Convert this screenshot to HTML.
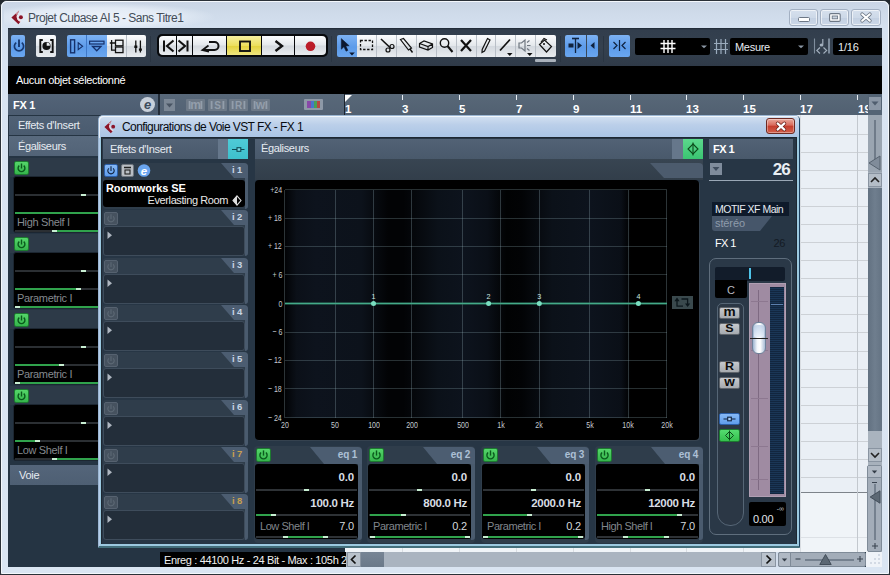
<!DOCTYPE html>
<html lang="fr"><head><meta charset="utf-8"><title>Projet Cubase AI 5 - Sans Titre1</title>
<style>
html,body{margin:0;padding:0}
body{width:890px;height:575px;position:relative;overflow:hidden;background:#22282e;font-family:"Liberation Sans",sans-serif;font-size:11px;color:#fff}
div{position:absolute;box-sizing:border-box}
svg{position:absolute;overflow:visible}
.t{white-space:nowrap;line-height:14px}
.b{font-weight:bold}
</style></head><body>

<div style="left:0px;top:0px;width:890px;height:575px;background:#dae4f1;border:1px solid #2b3138;border-radius:7px 7px 2px 2px"></div>
<div style="left:1px;top:1px;width:888px;height:573px;border:1px solid #f4f8fc;border-radius:6px 6px 1px 1px;background:linear-gradient(#cad5e5,#cfdbea 12px,#d5e1f0 27px,#d8e3f1 60px,#dae5f2)"></div>
<div style="left:4px;top:3px;width:210px;height:25px;background:radial-gradient(ellipse at 45% 55%,rgba(238,243,250,.95) 0,rgba(232,239,248,.8) 45%,rgba(220,230,242,0) 72%)"></div>
<svg style="left:11px;top:10px" width="14" height="15" viewBox="0 0 14 15" ><path d="M8.2 0.6 L0.4 7.4 L7.4 14.2 L9.6 11.6 A5 5 0 0 1 6.0 5.2 Z" fill="#8c1428"/><path d="M8.2 0.6 L4.5 4 L6.2 5.0 Z" fill="#d9a0a8"/><path d="M9.9 11.4 A4.9 4.9 0 0 1 6.3 5.4" stroke="#f3e3e6" stroke-width="1.2" fill="none"/><circle cx="9.9" cy="7.2" r="2" fill="#8c1428"/></svg>
<div class="t" style="left:28px;top:10px;font-size:12px;line-height:16px;color:#434c58;letter-spacing:-0.5px">Projet Cubase AI 5 - Sans Titre1</div>
<div style="left:789px;top:9px;width:29px;height:17px;border:1px solid #a3b0c2;border-radius:3px;background:linear-gradient(#d6e0ed,#cdd9e8 50%,#c3d0e2 52%,#cbd7e7);box-shadow:inset 0 0 0 1px rgba(255,255,255,.6)"></div>
<div style="left:820px;top:9px;width:29px;height:17px;border:1px solid #a3b0c2;border-radius:3px;background:linear-gradient(#d6e0ed,#cdd9e8 50%,#c3d0e2 52%,#cbd7e7);box-shadow:inset 0 0 0 1px rgba(255,255,255,.6)"></div>
<div style="left:851px;top:9px;width:30px;height:17px;border:1px solid #a3b0c2;border-radius:3px;background:linear-gradient(#d6e0ed,#cdd9e8 50%,#c3d0e2 52%,#cbd7e7);box-shadow:inset 0 0 0 1px rgba(255,255,255,.6)"></div>
<svg style="left:798px;top:17px" width="12" height="6" viewBox="0 0 12 6" ><rect x="0.5" y="0.5" width="11" height="4" rx="1" fill="#fff" stroke="#6d7886"/></svg>
<svg style="left:829px;top:13px" width="12" height="9" viewBox="0 0 12 9" ><rect x="0.6" y="0.6" width="10.6" height="7.8" rx="1.2" fill="#fff" stroke="#6d7886" stroke-width="1.1"/><rect x="3.2" y="3" width="5.4" height="2.8" fill="#c9d3df" stroke="#6d7886" stroke-width="0.9"/></svg>
<svg style="left:860px;top:12px" width="12" height="10" viewBox="0 0 12 10" ><path d="M2.2 2.3 L9.8 8.7 M9.8 2.3 L2.2 8.7" stroke="#6d7886" stroke-width="3.7" stroke-linecap="round"/><path d="M2.2 2.3 L9.8 8.7 M9.8 2.3 L2.2 8.7" stroke="#fff" stroke-width="2.1" stroke-linecap="round"/></svg>
<div style="left:8px;top:28px;width:874px;height:38px;background:linear-gradient(#1f2833,#323e4d 2px,#35414f 50%,#2f3a48)"></div>
<div style="left:8px;top:66px;width:874px;height:28px;background:#000"></div>
<div class="t" style="left:16px;top:73px;color:#fff;letter-spacing:-0.33px">Aucun objet sélectionné</div>
<div style="left:11px;top:34.5px;width:14px;height:22.5px;background:linear-gradient(#7db2f3,#5c9bea 55%,#6aa6ef);border-radius:2px"></div>
<svg style="left:11px;top:34px" width="14" height="23" viewBox="0 0 14 23" ><path d="M5.2 8.6 A4.6 4.6 0 1 0 10.8 8.6" fill="none" stroke="#17386f" stroke-width="1.7"/><path d="M8 5.5 V13" stroke="#17386f" stroke-width="1.9"/></svg>
<div style="left:36px;top:34.5px;width:20px;height:22.5px;background:linear-gradient(#fbfcfd,#e4e8ec 48%,#d4d9df 52%,#e9ecef);border-radius:2px"></div>
<svg style="left:36px;top:34px" width="20" height="23" viewBox="0 0 20 23" ><path d="M6.8 6 H4.3 V18 H6.8 M14.2 6 H16.7 V18 H14.2" fill="none" stroke="#111" stroke-width="1.9"/><circle cx="10.5" cy="12" r="4.1" fill="#111"/><path d="M10.7 11.8 V8.6 A3.2 3.2 0 0 1 13.9 11.8 Z" fill="#e9ecef"/></svg>
<div style="left:67px;top:34.5px;width:40px;height:22.5px;background:linear-gradient(#7db2f3,#5c9bea 55%,#6aa6ef);border-radius:2px 0 0 2px"></div>
<div style="left:107px;top:34.5px;width:39px;height:22.5px;background:linear-gradient(#fbfcfd,#e4e8ec 48%,#d4d9df 52%,#e9ecef);border-radius:0 2px 2px 0"></div>
<div style="left:86px;top:34.5px;width:1px;height:22.5px;background:#3f78c8"></div>
<div style="left:126px;top:34.5px;width:1px;height:22.5px;background:#b5bcc4"></div>
<svg style="left:67px;top:34px" width="20" height="23" viewBox="0 0 20 23" ><rect x="3.6" y="5.8" width="4" height="13" fill="none" stroke="#15306a" stroke-width="1.4"/><path d="M11.2 8.8 L15.6 12.2 L11.2 15.6 Z" fill="none" stroke="#15306a" stroke-width="1.1"/></svg>
<svg style="left:87px;top:34px" width="20" height="23" viewBox="0 0 20 23" ><rect x="2.6" y="7.2" width="14.4" height="2.8" fill="none" stroke="#15306a" stroke-width="1.2"/><path d="M5.5 12.5 H14 L9.75 16.8 Z" fill="none" stroke="#15306a" stroke-width="1.3"/></svg>
<svg style="left:107px;top:34px" width="20" height="23" viewBox="0 0 20 23" ><path d="M2.8 9 H6.4 M4.6 6 V16.2 H8.5 M4.6 9 H8.5" fill="none" stroke="#111" stroke-width="1.3"/><rect x="8.5" y="6.2" width="7.5" height="5.6" fill="none" stroke="#111" stroke-width="1.3"/><rect x="8.5" y="13" width="7.5" height="5.6" fill="none" stroke="#111" stroke-width="1.3"/></svg>
<svg style="left:127px;top:34px" width="20" height="23" viewBox="0 0 20 23" ><path d="M8.8 6.5 V18.6 M13.4 6.5 V18.6" stroke="#111" stroke-width="1.3"/><path d="M7.3 12.8 H10.3 M11.9 15.6 H14.9" stroke="#111" stroke-width="2.4"/></svg>
<div style="left:157px;top:34px;width:171px;height:23px;background:#07090c;border-radius:5px"></div>
<div style="left:159px;top:36px;width:17px;height:19px;background:linear-gradient(#fbfcfd,#e4e8ec 48%,#d4d9df 52%,#e9ecef);border-radius:4px 0 0 4px"></div>
<div style="left:177px;top:36px;width:15px;height:19px;background:linear-gradient(#fbfcfd,#e4e8ec 48%,#d4d9df 52%,#e9ecef);border-radius:0"></div>
<div style="left:193px;top:36px;width:33px;height:19px;background:linear-gradient(#fbfcfd,#e4e8ec 48%,#d4d9df 52%,#e9ecef);border-radius:0"></div>
<div style="left:227px;top:36px;width:34px;height:19px;background:linear-gradient(#f6f0a0,#ecdf5e 50%,#e3d23c 52%,#efe680);border-radius:0"></div>
<div style="left:262px;top:36px;width:32px;height:19px;background:linear-gradient(#fbfcfd,#e4e8ec 48%,#d4d9df 52%,#e9ecef);border-radius:0"></div>
<div style="left:295px;top:36px;width:31px;height:19px;background:linear-gradient(#fbfcfd,#e4e8ec 48%,#d4d9df 52%,#e9ecef);border-radius:0 4px 4px 0"></div>
<svg style="left:159px;top:36px" width="17" height="19" viewBox="0 0 17 19" ><path d="M5 4.5 V15.5" stroke="#111" stroke-width="2"/><path d="M14.5 4.5 L8 10 L14.5 15.5" fill="none" stroke="#111" stroke-width="2.1"/></svg>
<svg style="left:177px;top:36px" width="15" height="19" viewBox="0 0 15 19" ><path d="M10.5 4.5 V15.5" stroke="#111" stroke-width="2"/><path d="M1.5 4.5 L8 10 L1.5 15.5" fill="none" stroke="#111" stroke-width="2.1"/></svg>
<svg style="left:193px;top:36px" width="33" height="19" viewBox="0 0 33 19" ><path d="M11 14 H21.5 A4 4 0 0 0 21.5 6 H16" fill="none" stroke="#111" stroke-width="2"/><path d="M15.5 9.5 L9.5 14 L16 15.5" fill="none" stroke="#111" stroke-width="1.8"/></svg>
<svg style="left:227px;top:36px" width="34" height="19" viewBox="0 0 34 19" ><rect x="13" y="5.5" width="10" height="9.5" fill="none" stroke="#111" stroke-width="1.9"/></svg>
<svg style="left:262px;top:36px" width="32" height="19" viewBox="0 0 32 19" ><path d="M13.5 5 L20 10 L13.5 15" fill="none" stroke="#111" stroke-width="2.4"/></svg>
<svg style="left:295px;top:36px" width="31" height="19" viewBox="0 0 31 19" ><circle cx="15.5" cy="10.3" r="4.8" fill="#bb1c28"/></svg>
<div style="left:337px;top:34.5px;width:20px;height:22.5px;background:linear-gradient(#7db2f3,#5c9bea 55%,#6aa6ef);border-radius:2px 0 0 2px"></div>
<div style="left:357px;top:34.5px;width:199px;height:22.5px;background:linear-gradient(#fbfcfd,#e4e8ec 48%,#d4d9df 52%,#e9ecef);border-radius:0 2px 2px 0"></div>
<div style="left:376px;top:34.5px;width:1px;height:22.5px;background:#b9bfc7"></div>
<div style="left:396px;top:34.5px;width:1px;height:22.5px;background:#b9bfc7"></div>
<div style="left:416px;top:34.5px;width:1px;height:22.5px;background:#b9bfc7"></div>
<div style="left:436px;top:34.5px;width:1px;height:22.5px;background:#b9bfc7"></div>
<div style="left:456px;top:34.5px;width:1px;height:22.5px;background:#b9bfc7"></div>
<div style="left:476px;top:34.5px;width:1px;height:22.5px;background:#b9bfc7"></div>
<div style="left:495px;top:34.5px;width:1px;height:22.5px;background:#b9bfc7"></div>
<div style="left:515px;top:34.5px;width:1px;height:22.5px;background:#b9bfc7"></div>
<div style="left:535px;top:34.5px;width:1px;height:22.5px;background:#b9bfc7"></div>
<svg style="left:337px;top:34px" width="20" height="23" viewBox="0 0 20 23" ><path d="M4.3 4.6 V15.2 L6.9 12.8 L9.1 17.2 L10.9 16.3 L8.8 12 L12.2 11.8 Z" fill="#0c1830" stroke="#0c1830" stroke-width="0.5"/><path d="M12.2 18.6 H17.8 L15 21.4 Z" fill="#0c1830"/></svg>
<svg style="left:357px;top:34px" width="20" height="23" viewBox="0 0 20 23" ><rect x="3.5" y="6.5" width="12" height="9" fill="none" stroke="#111" stroke-width="1.3" stroke-dasharray="2.4 1.6"/></svg>
<svg style="left:376px;top:34px" width="20" height="23" viewBox="0 0 20 23" ><path d="M5 5 L14.5 14" stroke="#111" stroke-width="1.6"/><circle cx="12" cy="16" r="2" fill="none" stroke="#111" stroke-width="1.2"/><circle cx="16" cy="12.5" r="2" fill="none" stroke="#111" stroke-width="1.2"/></svg>
<svg style="left:396px;top:34px" width="20" height="23" viewBox="0 0 20 23" ><path d="M4.5 5.5 L7.5 4.5 L15.5 14 L12.5 16 Z" fill="none" stroke="#111" stroke-width="1.2"/><path d="M14 15 L16.5 18.5" stroke="#111" stroke-width="1.4"/></svg>
<svg style="left:416px;top:34px" width="20" height="23" viewBox="0 0 20 23" ><path d="M3.5 9.5 L8 7 L16.5 10 V13.5 L12 16 L3.5 13 Z M3.5 9.5 L12 12.5 L16.5 10 M12 12.5 V16" fill="none" stroke="#111" stroke-width="1.2"/></svg>
<svg style="left:436px;top:34px" width="20" height="23" viewBox="0 0 20 23" ><circle cx="8.5" cy="9" r="4.2" fill="none" stroke="#111" stroke-width="1.4"/><path d="M11.5 12 L16.5 18" stroke="#111" stroke-width="2"/></svg>
<svg style="left:456px;top:34px" width="20" height="23" viewBox="0 0 20 23" ><path d="M5 6 L15 17 M15 6 L5 17" stroke="#111" stroke-width="2.2"/></svg>
<svg style="left:476px;top:34px" width="20" height="23" viewBox="0 0 20 23" ><path d="M11.5 4.5 L14 6 L8.5 17 L6 18.5 L6.2 15.5 Z" fill="none" stroke="#111" stroke-width="1.2"/></svg>
<svg style="left:495px;top:34px" width="20" height="23" viewBox="0 0 20 23" ><path d="M5 16.5 L15 5.5" stroke="#111" stroke-width="1.7"/><path d="M12 19 H17.5 L14.75 22 Z" fill="#111"/></svg>
<svg style="left:515px;top:34px" width="20" height="23" viewBox="0 0 20 23" ><path d="M4 9 H6.5 L10 6 V17 L6.5 14 H4 Z" fill="none" stroke="#6f7780" stroke-width="1.2"/><path d="M12 11.5 H15.5 M12 8.5 L14.5 6.5 M12 14.5 L14.5 16.5" stroke="#6f7780" stroke-width="1.2"/><path d="M12 19 H17.5 L14.75 22 Z" fill="#111"/></svg>
<svg style="left:535px;top:34px" width="20" height="23" viewBox="0 0 20 23" ><path d="M4.5 10.5 L9.5 6 L16.5 12.5 L11.5 18 Z" fill="none" stroke="#111" stroke-width="1.2"/><path d="M6 8 L9 4.5 L12 6" fill="none" stroke="#111" stroke-width="1.1"/><circle cx="9" cy="10" r="1" fill="#111"/></svg>
<div style="left:535px;top:59px;width:21px;height:3px;background:#aab2bc;border-radius:1px"></div>
<div style="left:565px;top:34.5px;width:33px;height:22.5px;background:linear-gradient(#7db2f3,#5c9bea 55%,#6aa6ef);border-radius:2px"></div>
<div style="left:586px;top:34.5px;width:1px;height:22.5px;background:#3a4858"></div>
<svg style="left:565px;top:34px" width="21" height="23" viewBox="0 0 21 23" ><path d="M10.5 4 V19" stroke="#10233f" stroke-width="1.3"/><path d="M7 4.5 H14" stroke="#10233f" stroke-width="1.6"/><rect x="3.5" y="9.5" width="5" height="4" fill="#10233f"/><path d="M12.5 8 L17 11.5 L12.5 15 Z" fill="#10233f"/></svg>
<svg style="left:587px;top:34px" width="11" height="23" viewBox="0 0 11 23" ><path d="M7.5 8 V15 L3.5 11.5 Z" fill="#10233f"/></svg>
<div style="left:609px;top:34.5px;width:21px;height:22.5px;background:linear-gradient(#7db2f3,#5c9bea 55%,#6aa6ef);border-radius:2px"></div>
<svg style="left:609px;top:34px" width="21" height="23" viewBox="0 0 21 23" ><path d="M10.5 6 V17" stroke="#10233f" stroke-width="1.2"/><path d="M4.5 8 L8 11.5 L4.5 15 M16.5 8 L13 11.5 L16.5 15" fill="none" stroke="#10233f" stroke-width="1.2"/></svg>
<div style="left:150px;top:36px;width:1px;height:26px;background:#2a3542"></div>
<div style="left:331px;top:36px;width:1px;height:26px;background:#2a3542"></div>
<div style="left:560px;top:36px;width:1px;height:26px;background:#2a3542"></div>
<div style="left:603px;top:36px;width:1px;height:26px;background:#2a3542"></div>
<div style="left:635px;top:38px;width:75px;height:17px;background:#000;border-radius:2px"></div>
<svg style="left:635px;top:38px" width="75" height="17" viewBox="0 0 75 17" ><path d="M25.5 5.5 H40.5 M25.5 10.5 H40.5 M29 2 V15 M33 2 V15 M37 2 V15" stroke="#fff" stroke-width="1.4"/><path d="M66 7.5 H72 L69 10.3 Z" fill="#8c98a6"/></svg>
<svg style="left:714px;top:39px" width="14" height="15" viewBox="0 0 14 15" ><path d="M0 4.5 H14 M0 10.5 H14 M2.5 0 V15 M7 0 V15 M11.5 0 V15" stroke="#9aabbd" stroke-width="1.2"/></svg>
<div style="left:730px;top:38px;width:78px;height:17px;background:#000;border-radius:2px"></div>
<div class="t" style="left:735px;top:39.5px;color:#e8ecf0;font-size:11px;letter-spacing:-0.3px">Mesure</div>
<svg style="left:730px;top:38px" width="78" height="17" viewBox="0 0 78 17" ><path d="M68 7.5 H74 L71 10.3 Z" fill="#8c98a6"/></svg>
<svg style="left:813px;top:37px" width="17" height="20" viewBox="0 0 17 20" ><path d="M1.5 1.5 V16.5" stroke="#7f8d9d" stroke-width="1.1"/><path d="M16 1.5 V16.5" stroke="#8796a6" stroke-width="1.8"/><path d="M9.8 2 V7.5" stroke="#a3b0be" stroke-width="1.2"/><ellipse cx="8.5" cy="8" rx="1.9" ry="1.5" fill="#a3b0be"/><path d="M7 10.5 L3.8 13.5 L7 16.5 M10.5 10.5 L13.7 13.5 L10.5 16.5" fill="none" stroke="#a3b0be" stroke-width="1.1"/></svg>
<div style="left:833px;top:38px;width:49px;height:17px;background:#000;border-radius:2px 0 0 2px"></div>
<div class="t" style="left:838px;top:39.5px;color:#e8ecf0;font-size:11px;letter-spacing:-0.2px">1/16</div>
<div style="left:8px;top:94px;width:874px;height:473px;background:#253443"></div>
<div style="left:8px;top:94px;width:150px;height:21px;background:linear-gradient(#536478,#4c5c70)"></div>
<div class="t" style="left:13px;top:98px;font-weight:bold;color:#fff;letter-spacing:-0.3px">FX 1</div>
<svg style="left:139px;top:96px" width="17" height="17" viewBox="0 0 17 17" ><circle cx="8.5" cy="8.5" r="7.5" fill="#c8d0da"/><text x="8.5" y="13" font-family="Liberation Sans,sans-serif" font-size="13" font-style="italic" font-weight="bold" text-anchor="middle" fill="#3d4b5c">e</text></svg>
<div style="left:157.5px;top:94px;width:3px;height:21px;background:#232d39"></div>
<div style="left:160px;top:94px;width:185px;height:21px;background:linear-gradient(#586879,#536274)"></div>
<div style="left:164px;top:99px;width:11px;height:12px;background:#7b8795"></div>
<svg style="left:164px;top:99px" width="11" height="12" viewBox="0 0 11 12" ><path d="M2 4.5 H9 L5.5 8.5 Z" fill="#485463"/></svg>
<svg style="left:186.0px;top:98.5px" width="19" height="12" viewBox="0 0 19 12" ><rect x="0" y="0" width="19" height="12" rx="1" fill="#6d7987"/><path d="M3.6 2 V10 M15.4 2 V10" stroke="#939eab" stroke-width="1.8"/><text x="9.5" y="9.8" font-family="Liberation Sans,sans-serif" font-size="12" font-weight="bold" text-anchor="middle" fill="#939eab">m</text></svg>
<svg style="left:207.5px;top:98.5px" width="19" height="12" viewBox="0 0 19 12" ><rect x="0" y="0" width="19" height="12" rx="1" fill="#6d7987"/><path d="M3.6 2 V10 M15.4 2 V10" stroke="#939eab" stroke-width="1.8"/><text x="9.5" y="9.8" font-family="Liberation Sans,sans-serif" font-size="10" font-weight="bold" text-anchor="middle" fill="#939eab">S</text></svg>
<svg style="left:229.0px;top:98.5px" width="19" height="12" viewBox="0 0 19 12" ><rect x="0" y="0" width="19" height="12" rx="1" fill="#6d7987"/><path d="M3.6 2 V10 M15.4 2 V10" stroke="#939eab" stroke-width="1.8"/><text x="9.5" y="9.8" font-family="Liberation Sans,sans-serif" font-size="10" font-weight="bold" text-anchor="middle" fill="#939eab">R</text></svg>
<svg style="left:250.5px;top:98.5px" width="19" height="12" viewBox="0 0 19 12" ><rect x="0" y="0" width="19" height="12" rx="1" fill="#6d7987"/><path d="M3.6 2 V10 M15.4 2 V10" stroke="#939eab" stroke-width="1.8"/><text x="9.5" y="9.8" font-family="Liberation Sans,sans-serif" font-size="12" font-weight="bold" text-anchor="middle" fill="#939eab">w</text></svg>
<div style="left:304px;top:99px;width:19px;height:11px;background:#8e99a7;border-radius:1px"></div>
<div style="left:307px;top:101px;width:4px;height:7px;background:#8848a8"></div>
<div style="left:311px;top:101px;width:3px;height:7px;background:#4878c8"></div>
<div style="left:314px;top:101px;width:3px;height:7px;background:#48a058"></div>
<div style="left:317px;top:101px;width:3px;height:7px;background:#b84840"></div>
<div style="left:345px;top:94px;width:523px;height:21px;background:linear-gradient(#586878,#516071)"></div>
<div style="left:344px;top:94px;width:1px;height:21px;background:#1c242e"></div>
<div style="left:345px;top:95px;width:1px;height:5px;background:#e8edf2"></div>
<div class="t" style="left:345px;top:102px;font-weight:bold;font-size:11.5px;color:#fff;line-height:14px">1</div>
<div style="left:402px;top:95px;width:1px;height:5px;background:#e8edf2"></div>
<div class="t" style="left:402px;top:102px;font-weight:bold;font-size:11.5px;color:#fff;line-height:14px">3</div>
<div style="left:459px;top:95px;width:1px;height:5px;background:#e8edf2"></div>
<div class="t" style="left:459px;top:102px;font-weight:bold;font-size:11.5px;color:#fff;line-height:14px">5</div>
<div style="left:516px;top:95px;width:1px;height:5px;background:#e8edf2"></div>
<div class="t" style="left:516px;top:102px;font-weight:bold;font-size:11.5px;color:#fff;line-height:14px">7</div>
<div style="left:573px;top:95px;width:1px;height:5px;background:#e8edf2"></div>
<div class="t" style="left:573px;top:102px;font-weight:bold;font-size:11.5px;color:#fff;line-height:14px">9</div>
<div style="left:630px;top:95px;width:1px;height:5px;background:#e8edf2"></div>
<div class="t" style="left:630px;top:102px;font-weight:bold;font-size:11.5px;color:#fff;line-height:14px">11</div>
<div style="left:686px;top:95px;width:1px;height:5px;background:#e8edf2"></div>
<div class="t" style="left:686px;top:102px;font-weight:bold;font-size:11.5px;color:#fff;line-height:14px">13</div>
<div style="left:743px;top:95px;width:1px;height:5px;background:#e8edf2"></div>
<div class="t" style="left:743px;top:102px;font-weight:bold;font-size:11.5px;color:#fff;line-height:14px">15</div>
<div style="left:800px;top:95px;width:1px;height:5px;background:#e8edf2"></div>
<div class="t" style="left:800px;top:102px;font-weight:bold;font-size:11.5px;color:#fff;line-height:14px">17</div>
<div style="left:857px;top:95px;width:1px;height:5px;background:#e8edf2"></div>
<div style="left:858px;top:102px;width:10px;height:14px;overflow:hidden"><div class="t b" style="left:0;top:0;font-size:11.5px;color:#fff;line-height:14px">19</div></div>
<svg style="left:345px;top:95px" width="8" height="8" viewBox="0 0 8 8" ><path d="M0 0 H7 L0 7 Z" fill="#fff"/></svg>
<div style="left:868px;top:94px;width:14px;height:21px;background:#546475"></div>
<div style="left:869px;top:97px;width:12px;height:13px;background:#8b97a6"></div>
<svg style="left:869px;top:97px" width="12" height="13" viewBox="0 0 12 13" ><path d="M2.5 4.5 H9.5 L6 8.5 Z" fill="#4f5d6e"/></svg>
<div style="left:345px;top:115px;width:523px;height:437px;background:#eaeff5"></div>
<div style="left:345px;top:134px;width:523px;height:1px;background:#cdd1d6"></div>
<div style="left:345px;top:152px;width:523px;height:1px;background:#cdd1d6"></div>
<div style="left:345px;top:170px;width:523px;height:1px;background:#cdd1d6"></div>
<div style="left:345px;top:188px;width:523px;height:1px;background:#cdd1d6"></div>
<div style="left:345px;top:206px;width:523px;height:1px;background:#cdd1d6"></div>
<div style="left:345px;top:224px;width:523px;height:1px;background:#cdd1d6"></div>
<div style="left:345px;top:242px;width:523px;height:1px;background:#cdd1d6"></div>
<div style="left:345px;top:260px;width:523px;height:1px;background:#cdd1d6"></div>
<div style="left:345px;top:278px;width:523px;height:1px;background:#cdd1d6"></div>
<div style="left:345px;top:296px;width:523px;height:1px;background:#cdd1d6"></div>
<div style="left:345px;top:314px;width:523px;height:1px;background:#cdd1d6"></div>
<div style="left:345px;top:332px;width:523px;height:1px;background:#cdd1d6"></div>
<div style="left:345px;top:351px;width:523px;height:1px;background:#cdd1d6"></div>
<div style="left:345px;top:369px;width:523px;height:1px;background:#cdd1d6"></div>
<div style="left:345px;top:387px;width:523px;height:1px;background:#cdd1d6"></div>
<div style="left:345px;top:405px;width:523px;height:1px;background:#cdd1d6"></div>
<div style="left:345px;top:423px;width:523px;height:1px;background:#cdd1d6"></div>
<div style="left:345px;top:441px;width:523px;height:1px;background:#cdd1d6"></div>
<div style="left:345px;top:459px;width:523px;height:1px;background:#cdd1d6"></div>
<div style="left:345px;top:477px;width:523px;height:1px;background:#cdd1d6"></div>
<div style="left:345px;top:492px;width:523px;height:1px;background:#7d838a"></div>
<div style="left:345px;top:493px;width:523px;height:59px;background:#f0f4f8"></div>
<div style="left:345px;top:537px;width:523px;height:1px;background:#dde1e6"></div>
<div style="left:402px;top:115px;width:1px;height:437px;background:#d9dde2"></div>
<div style="left:459px;top:115px;width:1px;height:437px;background:#d9dde2"></div>
<div style="left:516px;top:115px;width:1px;height:437px;background:#d9dde2"></div>
<div style="left:573px;top:115px;width:1px;height:437px;background:#d9dde2"></div>
<div style="left:630px;top:115px;width:1px;height:437px;background:#d9dde2"></div>
<div style="left:686px;top:115px;width:1px;height:437px;background:#d9dde2"></div>
<div style="left:743px;top:115px;width:1px;height:437px;background:#d9dde2"></div>
<div style="left:800px;top:115px;width:1px;height:437px;background:#d9dde2"></div>
<div style="left:857px;top:115px;width:1px;height:437px;background:#c3c8ce"></div>
<div style="left:868px;top:115px;width:14px;height:437px;background:#a7b1bc"></div>
<div style="left:868px;top:115px;width:14px;height:57px;background:#9aa5b1"></div>
<div style="left:874px;top:120px;width:2px;height:44px;background:#6f7b89"></div>
<svg style="left:868px;top:155px" width="14" height="16" viewBox="0 0 14 16" ><path d="M12 1 V15 L1 8 Z" fill="#808c9a" stroke="#56626f" stroke-width="1"/></svg>
<div style="left:868px;top:173px;width:14px;height:14px;background:#b4bdc7;border:1px solid #8994a1"></div>
<svg style="left:868px;top:173px" width="14" height="14" viewBox="0 0 14 14" ><path d="M3 9 L7 5 L11 9" fill="none" stroke="#222" stroke-width="1.6"/></svg>
<div style="left:868px;top:188px;width:14px;height:243px;background:linear-gradient(90deg,#627181,#6f7e8e 50%,#647383)"></div>
<div style="left:868px;top:431px;width:14px;height:17px;background:#a9b3be"></div>
<div style="left:868px;top:448px;width:14px;height:14px;background:#b4bdc7;border:1px solid #8994a1"></div>
<svg style="left:868px;top:448px" width="14" height="14" viewBox="0 0 14 14" ><path d="M3 5 L7 9 L11 5" fill="none" stroke="#222" stroke-width="1.6"/></svg>
<div style="left:867px;top:465px;width:15px;height:87px;background:#a3adb9;border:1px solid #7f8b98;border-radius:2px"></div>
<div style="left:868px;top:466px;width:13px;height:12px;background:#b0b9c4;border-bottom:1px solid #7f8b98"></div>
<svg style="left:868px;top:466px" width="13" height="12" viewBox="0 0 13 12" ><path d="M3.8 4.5 H9.2 L6.5 7.5 Z" fill="#333c47"/></svg>
<div style="left:874px;top:484px;width:2px;height:56px;background:#75818f"></div>
<div style="left:872px;top:482px;width:5px;height:1px;background:#3a4450"></div>
<svg style="left:868px;top:489px" width="14" height="16" viewBox="0 0 14 16" ><path d="M12 1.8 V14.2 L2.2 8 Z" fill="#5c6874" stroke="#434e5a" stroke-width="1"/></svg>
<svg style="left:870px;top:542px" width="10" height="8" viewBox="0 0 10 8" ><path d="M2 4 H8 M5 1 V7" stroke="#3a4450" stroke-width="1.1"/></svg>
<div style="left:8px;top:552px;width:874px;height:15px;background:#253443"></div>
<div style="left:160px;top:552px;width:186px;height:15px;background:#000"></div>
<div style="left:160px;top:552px;width:186px;height:15px;overflow:hidden"><div class="t" style="left:4px;top:1px;color:#f0f0f0;letter-spacing:-0.35px">Enreg : 44100 Hz - 24 Bit - Max : 105h 2</div></div>
<div style="left:346px;top:552px;width:430px;height:15px;background:#aab4c0"></div>
<div style="left:347px;top:552px;width:14px;height:15px;background:#b9c2cc;border:1px solid #8a95a2"></div>
<svg style="left:347px;top:552px" width="14" height="15" viewBox="0 0 14 15" ><path d="M8.5 3.5 L4.5 7.5 L8.5 11.5" fill="none" stroke="#111" stroke-width="1.7"/></svg>
<div style="left:361px;top:552px;width:23px;height:15px;background:linear-gradient(#778595,#6b7989)"></div>
<div style="left:761px;top:552px;width:15px;height:15px;background:#b9c2cc;border:1px solid #8a95a2"></div>
<svg style="left:761px;top:552px" width="15" height="15" viewBox="0 0 15 15" ><path d="M5.5 3.5 L9.5 7.5 L5.5 11.5" fill="none" stroke="#111" stroke-width="1.7"/></svg>
<div style="left:776px;top:552px;width:3px;height:15px;background:#d3deec"></div>
<div style="left:778px;top:552px;width:88px;height:15px;background:#a3adb9;border:1px solid #7f8b98;border-radius:2px"></div>
<div style="left:778px;top:552px;width:13px;height:15px;background:#b0b9c4;border:1px solid #7f8b98;border-radius:2px 0 0 2px"></div>
<svg style="left:778px;top:552px" width="13" height="15" viewBox="0 0 13 15" ><path d="M3.8 6.5 H9.2 L6.5 9.5 Z" fill="#333c47"/></svg>
<div style="left:805px;top:559px;width:49px;height:2px;background:#75818f"></div>
<svg style="left:794px;top:555px" width="8" height="8" viewBox="0 0 8 8" ><path d="M1.5 4 H6.5" stroke="#3a4450" stroke-width="1.1"/></svg>
<svg style="left:856px;top:555px" width="8" height="8" viewBox="0 0 8 8" ><path d="M1 4 H7 M4 1 V7" stroke="#3a4450" stroke-width="1.1"/></svg>
<svg style="left:818px;top:553px" width="16" height="13" viewBox="0 0 16 13" ><path d="M1.8 11.5 H13.2 L7.5 1.5 Z" fill="#5c6874" stroke="#434e5a" stroke-width="1"/></svg>
<div style="left:866px;top:552px;width:16px;height:15px;background:#eff3f8"></div>
<svg style="left:867px;top:552px" width="16" height="15" viewBox="0 0 16 15" ><g fill="#d3dae4"><rect x="11" y="10" width="2" height="2"/><rect x="11" y="6" width="2" height="2"/><rect x="11" y="2" width="2" height="2"/><rect x="7" y="10" width="2" height="2"/><rect x="7" y="6" width="2" height="2"/><rect x="3" y="10" width="2" height="2"/></g></svg>
<div style="left:9px;top:116px;width:92px;height:19px;background:linear-gradient(#506175,#4a5b6f)"></div>
<div class="t" style="left:18px;top:118px;color:#e6ebf1;letter-spacing:-0.35px">Effets d'Insert</div>
<div style="left:9px;top:136px;width:92px;height:20px;background:linear-gradient(#596a7e,#526377)"></div>
<div class="t" style="left:18px;top:139px;color:#e6ebf1;letter-spacing:-0.35px">Égaliseurs</div>
<div style="left:10px;top:158px;width:92px;height:19px;background:#2d3a48"></div>
<div style="left:14px;top:161px;width:15px;height:14px;background:linear-gradient(#55d56a,#35b54c);border:1px solid #1d7a30;border-radius:2px"></div>
<svg style="left:14px;top:161px" width="15" height="14" viewBox="0 0 15 14" ><path d="M5.3 4.6 A3.4 3.4 0 1 0 9.7 4.6" fill="none" stroke="#0a5a1c" stroke-width="1.4"/><path d="M7.5 2.5 V7.5" stroke="#0a5a1c" stroke-width="1.4"/></svg>
<div style="left:13px;top:176px;width:90px;height:57px;background:#000;border-radius:3px 0 0 3px;border:1px solid #1c2631"></div>
<div style="left:15px;top:194px;width:84px;height:2px;background:#2b2f33"></div>
<div style="left:81px;top:194px;width:5px;height:2px;background:#c8eed2"></div>
<div style="left:15px;top:212px;width:84px;height:2px;background:#30a24c"></div>
<div class="t" style="left:17px;top:215px;color:#84898e;font-size:11px;letter-spacing:-0.35px">High Shelf I</div>
<div style="left:15px;top:230px;width:84px;height:2px;background:#2b2f33"></div>
<div style="left:57px;top:230px;width:42px;height:2px;background:#30a24c"></div>
<div style="left:52px;top:230px;width:5px;height:2px;background:#c8eed2"></div>
<div style="left:10px;top:234px;width:92px;height:19px;background:#2d3a48"></div>
<div style="left:14px;top:237px;width:15px;height:14px;background:linear-gradient(#55d56a,#35b54c);border:1px solid #1d7a30;border-radius:2px"></div>
<svg style="left:14px;top:237px" width="15" height="14" viewBox="0 0 15 14" ><path d="M5.3 4.6 A3.4 3.4 0 1 0 9.7 4.6" fill="none" stroke="#0a5a1c" stroke-width="1.4"/><path d="M7.5 2.5 V7.5" stroke="#0a5a1c" stroke-width="1.4"/></svg>
<div style="left:13px;top:252px;width:90px;height:57px;background:#000;border-radius:3px 0 0 3px;border:1px solid #1c2631"></div>
<div style="left:15px;top:270px;width:84px;height:2px;background:#2b2f33"></div>
<div style="left:81px;top:270px;width:5px;height:2px;background:#c8eed2"></div>
<div style="left:15px;top:288px;width:84px;height:2px;background:#2b2f33"></div>
<div style="left:15px;top:288px;width:61px;height:2px;background:#30a24c"></div>
<div style="left:76px;top:288px;width:5px;height:2px;background:#c8eed2"></div>
<div class="t" style="left:17px;top:291px;color:#84898e;font-size:11px;letter-spacing:-0.35px">Parametric I</div>
<div style="left:15px;top:306px;width:84px;height:2px;background:#2b2f33"></div>
<div style="left:20px;top:306px;width:79px;height:2px;background:#30a24c"></div>
<div style="left:15px;top:306px;width:5px;height:2px;background:#c8eed2"></div>
<div style="left:10px;top:310px;width:92px;height:19px;background:#2d3a48"></div>
<div style="left:14px;top:313px;width:15px;height:14px;background:linear-gradient(#55d56a,#35b54c);border:1px solid #1d7a30;border-radius:2px"></div>
<svg style="left:14px;top:313px" width="15" height="14" viewBox="0 0 15 14" ><path d="M5.3 4.6 A3.4 3.4 0 1 0 9.7 4.6" fill="none" stroke="#0a5a1c" stroke-width="1.4"/><path d="M7.5 2.5 V7.5" stroke="#0a5a1c" stroke-width="1.4"/></svg>
<div style="left:13px;top:328px;width:90px;height:57px;background:#000;border-radius:3px 0 0 3px;border:1px solid #1c2631"></div>
<div style="left:15px;top:346px;width:84px;height:2px;background:#2b2f33"></div>
<div style="left:81px;top:346px;width:5px;height:2px;background:#c8eed2"></div>
<div style="left:15px;top:364px;width:84px;height:2px;background:#2b2f33"></div>
<div style="left:15px;top:364px;width:44px;height:2px;background:#30a24c"></div>
<div style="left:59px;top:364px;width:5px;height:2px;background:#c8eed2"></div>
<div class="t" style="left:17px;top:367px;color:#84898e;font-size:11px;letter-spacing:-0.35px">Parametric I</div>
<div style="left:15px;top:382px;width:84px;height:2px;background:#2b2f33"></div>
<div style="left:20px;top:382px;width:79px;height:2px;background:#30a24c"></div>
<div style="left:15px;top:382px;width:5px;height:2px;background:#c8eed2"></div>
<div style="left:10px;top:386px;width:92px;height:19px;background:#2d3a48"></div>
<div style="left:14px;top:389px;width:15px;height:14px;background:linear-gradient(#55d56a,#35b54c);border:1px solid #1d7a30;border-radius:2px"></div>
<svg style="left:14px;top:389px" width="15" height="14" viewBox="0 0 15 14" ><path d="M5.3 4.6 A3.4 3.4 0 1 0 9.7 4.6" fill="none" stroke="#0a5a1c" stroke-width="1.4"/><path d="M7.5 2.5 V7.5" stroke="#0a5a1c" stroke-width="1.4"/></svg>
<div style="left:13px;top:404px;width:90px;height:57px;background:#000;border-radius:3px 0 0 3px;border:1px solid #1c2631"></div>
<div style="left:15px;top:422px;width:84px;height:2px;background:#2b2f33"></div>
<div style="left:81px;top:422px;width:5px;height:2px;background:#c8eed2"></div>
<div style="left:15px;top:440px;width:84px;height:2px;background:#2b2f33"></div>
<div style="left:15px;top:440px;width:20px;height:2px;background:#30a24c"></div>
<div style="left:35px;top:440px;width:5px;height:2px;background:#c8eed2"></div>
<div class="t" style="left:17px;top:443px;color:#84898e;font-size:11px;letter-spacing:-0.35px">Low Shelf I</div>
<div style="left:15px;top:458px;width:84px;height:2px;background:#2b2f33"></div>
<div style="left:57px;top:458px;width:42px;height:2px;background:#30a24c"></div>
<div style="left:52px;top:458px;width:5px;height:2px;background:#c8eed2"></div>
<div style="left:10px;top:465px;width:92px;height:20px;background:linear-gradient(#54657a,#4e5f73)"></div>
<div class="t" style="left:19px;top:468px;color:#e6ebf1;letter-spacing:-0.3px">Voie</div>
<div style="left:98px;top:115px;width:702px;height:433px;background:#b5cde9;border:1px solid #9bb6d3;border-right-color:#1d4160;border-bottom:2px solid #436f7c;border-radius:5px 5px 1px 1px"></div>
<div style="left:99px;top:116px;width:700px;height:22px;background:linear-gradient(#d2e0f1,#bbcfe9 40%,#a9c4e5);border-radius:4px 4px 0 0;box-shadow:inset 1px 1px 0 rgba(255,255,255,.7)"></div>
<svg style="left:104px;top:120px" width="13" height="14" viewBox="0 0 13 14" ><path d="M7.6 0.6 L0.4 6.9 L6.9 13.2 L8.9 10.8 A4.6 4.6 0 0 1 5.6 4.8 Z" fill="#8c1428"/><path d="M7.6 0.6 L4.2 3.7 L5.8 4.6 Z" fill="#d9a0a8"/><path d="M9.2 10.6 A4.5 4.5 0 0 1 5.9 5 " stroke="#f3e3e6" stroke-width="1.1" fill="none"/><circle cx="9.2" cy="6.7" r="1.9" fill="#8c1428"/></svg>
<div class="t" style="left:122px;top:119px;font-size:12px;line-height:16px;color:#080b10;letter-spacing:-0.58px">Configurations de Voie VST FX - FX 1</div>
<div style="left:766px;top:118px;width:29px;height:16px;border:1px solid #6e2a22;border-radius:3px;background:linear-gradient(#e9a99c,#d9695a 45%,#c43c2c 50%,#d2604c);box-shadow:inset 0 0 0 1px rgba(255,255,255,.35)"></div>
<svg style="left:775px;top:122px" width="12" height="9" viewBox="0 0 12 9" ><path d="M2.6 1.4 L9.4 7.6 M9.4 1.4 L2.6 7.6" stroke="#6a2018" stroke-width="3.6" stroke-linecap="round"/><path d="M2.6 1.4 L9.4 7.6 M9.4 1.4 L2.6 7.6" stroke="#fff" stroke-width="2.1" stroke-linecap="round"/></svg>
<div style="left:101px;top:137px;width:696px;height:409px;background:#273645;border:1px solid #1d2731"></div>
<div style="left:100px;top:137px;width:699px;height:409px;border:2px solid #9cc9e0;border-left-width:1px;border-top:none;background:none"></div>
<div style="left:103px;top:139px;width:145px;height:20px;background:linear-gradient(#526275,#49596b)"></div>
<div class="t" style="left:110px;top:142px;color:#e6ebf1;letter-spacing:-0.35px">Effets d'Insert</div>
<div style="left:218px;top:139px;width:10px;height:20px;background:#66778b"></div>
<div style="left:228px;top:139px;width:20px;height:20px;background:linear-gradient(#4fcbd6,#3ec0cc)"></div>
<svg style="left:228px;top:139px" width="20" height="20" viewBox="0 0 20 20" ><path d="M4 10.5 H9 M12.8 10.5 H16.5" stroke="#0e4a54" stroke-width="1.1"/><rect x="9" y="8.7" width="3.8" height="3.6" fill="#7adbe4" stroke="#0e4a54" stroke-width="1.1"/></svg>
<div style="left:255px;top:139px;width:448px;height:20px;background:linear-gradient(#526275,#49596b)"></div>
<div class="t" style="left:261px;top:141px;color:#e6ebf1;letter-spacing:-0.35px">Égaliseurs</div>
<div style="left:672px;top:139px;width:11px;height:20px;background:#66778b"></div>
<div style="left:683px;top:139px;width:20px;height:20px;background:linear-gradient(#5cd98c,#3ac472)"></div>
<svg style="left:683px;top:139px" width="20" height="20" viewBox="0 0 20 20" ><path d="M10 3.5 V16.5" stroke="#0c4a1a" stroke-width="1.1"/><path d="M10 5 L15 10 L10 15 L5 10 Z" fill="none" stroke="#0c4a1a" stroke-width="1.1"/></svg>
<div style="left:255px;top:159px;width:448px;height:21px;background:linear-gradient(#384552,#323e4a)"></div>
<svg style="left:650px;top:163px" width="53" height="15" viewBox="0 0 53 15" ><path d="M0 0 H49 Q53 0 53 4 V15 H14 Z" fill="#4c5b6d"/></svg>
<div style="left:103px;top:163px;width:145px;height:46px;background:#2f3d4b;border-radius:3px"></div>
<div style="left:245px;top:165px;width:3px;height:44px;background:#4a5b6e;border-radius:0 2px 3px 0"></div>
<svg style="left:221px;top:163px" width="27" height="15" viewBox="0 0 27 15" ><path d="M0 0 H23 Q27 0 27 4 V15 H13 Z" fill="#4c5d71"/></svg>
<div class="t" style="right:648px;top:163px;font-weight:bold;color:#c8d5e4;font-size:9.5px;letter-spacing:-0.2px">i 1</div>
<div style="left:104px;top:164px;width:14px;height:13px;background:linear-gradient(#86b8f5,#5f9eec);border:1px solid #2c5fa8;border-radius:2px"></div>
<svg style="left:104px;top:164px" width="14" height="13" viewBox="0 0 14 13" ><path d="M4.9 4.3 A3.2 3.2 0 1 0 9.1 4.3" fill="none" stroke="#10233f" stroke-width="1.1"/><path d="M7 2.2 V7" stroke="#10233f" stroke-width="1.1"/></svg>
<div style="left:121px;top:164px;width:13px;height:13px;background:#b9bec4;border:1px solid #70777f;border-radius:2px"></div>
<svg style="left:121px;top:164px" width="13" height="13" viewBox="0 0 13 13" ><path d="M3 3.5 H10" stroke="#222" stroke-width="1.5"/><rect x="4" y="6" width="5" height="4" fill="none" stroke="#222" stroke-width="1.1"/></svg>
<svg style="left:137px;top:164px" width="14" height="14" viewBox="0 0 14 14" ><circle cx="7" cy="6.5" r="6.3" fill="#6aa5ee"/><text x="7" y="10.5" font-family="Liberation Sans,sans-serif" font-size="11.5" font-style="italic" font-weight="bold" text-anchor="middle" fill="#fff">e</text></svg>
<div style="left:103px;top:180px;width:142px;height:27px;background:#000;border-radius:3px"></div>
<div class="t" style="left:106px;top:182px;font-weight:bold;color:#fff;font-size:11px;letter-spacing:-0.08px;line-height:13px">Roomworks SE</div>
<div class="t" style="right:662px;top:194px;color:#e8e8e8;font-size:11px;letter-spacing:-0.4px;line-height:13px">Everlasting Room</div>
<svg style="left:232px;top:195px" width="10" height="11" viewBox="0 0 10 11" ><path d="M5 0.8 L9 5.5 L5 10.2 L1 5.5 Z" fill="none" stroke="#ddd" stroke-width="1.1"/><path d="M5 0.8 L1 5.5 L5 10.2 Z" fill="#ddd"/></svg>
<div style="left:103px;top:210px;width:145px;height:46px;background:#2f3d4b;border-radius:3px"></div>
<div style="left:245px;top:212px;width:3px;height:44px;background:#4a5b6e;border-radius:0 2px 3px 0"></div>
<svg style="left:221px;top:210px" width="27" height="15" viewBox="0 0 27 15" ><path d="M0 0 H23 Q27 0 27 4 V15 H13 Z" fill="#4c5d71"/></svg>
<div class="t" style="right:648px;top:210px;font-weight:bold;color:#c8d5e4;font-size:9.5px;letter-spacing:-0.2px">i 2</div>
<div style="left:104px;top:212px;width:14px;height:13px;background:#46525f;border:1px solid #566270;border-radius:2px"></div>
<svg style="left:104px;top:212px" width="14" height="13" viewBox="0 0 14 13" ><path d="M4.9 4.3 A3.2 3.2 0 1 0 9.1 4.3" fill="none" stroke="#5d6975" stroke-width="1.1"/><path d="M7 2.2 V7" stroke="#5d6975" stroke-width="1.1"/></svg>
<div style="left:103px;top:226px;width:142px;height:30px;background:#232e3a;border:1px solid #3e4c5b;border-radius:3px"></div>
<svg style="left:107px;top:231px" width="6" height="9" viewBox="0 0 6 9" ><path d="M0.5 0.5 V8 L5 4.2 Z" fill="#aeb6c0"/></svg>
<div style="left:103px;top:258px;width:145px;height:46px;background:#2f3d4b;border-radius:3px"></div>
<div style="left:245px;top:260px;width:3px;height:44px;background:#4a5b6e;border-radius:0 2px 3px 0"></div>
<svg style="left:221px;top:258px" width="27" height="15" viewBox="0 0 27 15" ><path d="M0 0 H23 Q27 0 27 4 V15 H13 Z" fill="#4c5d71"/></svg>
<div class="t" style="right:648px;top:258px;font-weight:bold;color:#c8d5e4;font-size:9.5px;letter-spacing:-0.2px">i 3</div>
<div style="left:104px;top:260px;width:14px;height:13px;background:#46525f;border:1px solid #566270;border-radius:2px"></div>
<svg style="left:104px;top:260px" width="14" height="13" viewBox="0 0 14 13" ><path d="M4.9 4.3 A3.2 3.2 0 1 0 9.1 4.3" fill="none" stroke="#5d6975" stroke-width="1.1"/><path d="M7 2.2 V7" stroke="#5d6975" stroke-width="1.1"/></svg>
<div style="left:103px;top:274px;width:142px;height:30px;background:#232e3a;border:1px solid #3e4c5b;border-radius:3px"></div>
<svg style="left:107px;top:279px" width="6" height="9" viewBox="0 0 6 9" ><path d="M0.5 0.5 V8 L5 4.2 Z" fill="#aeb6c0"/></svg>
<div style="left:103px;top:305px;width:145px;height:46px;background:#2f3d4b;border-radius:3px"></div>
<div style="left:245px;top:307px;width:3px;height:44px;background:#4a5b6e;border-radius:0 2px 3px 0"></div>
<svg style="left:221px;top:305px" width="27" height="15" viewBox="0 0 27 15" ><path d="M0 0 H23 Q27 0 27 4 V15 H13 Z" fill="#4c5d71"/></svg>
<div class="t" style="right:648px;top:305px;font-weight:bold;color:#c8d5e4;font-size:9.5px;letter-spacing:-0.2px">i 4</div>
<div style="left:104px;top:307px;width:14px;height:13px;background:#46525f;border:1px solid #566270;border-radius:2px"></div>
<svg style="left:104px;top:307px" width="14" height="13" viewBox="0 0 14 13" ><path d="M4.9 4.3 A3.2 3.2 0 1 0 9.1 4.3" fill="none" stroke="#5d6975" stroke-width="1.1"/><path d="M7 2.2 V7" stroke="#5d6975" stroke-width="1.1"/></svg>
<div style="left:103px;top:321px;width:142px;height:30px;background:#232e3a;border:1px solid #3e4c5b;border-radius:3px"></div>
<svg style="left:107px;top:326px" width="6" height="9" viewBox="0 0 6 9" ><path d="M0.5 0.5 V8 L5 4.2 Z" fill="#aeb6c0"/></svg>
<div style="left:103px;top:352px;width:145px;height:46px;background:#2f3d4b;border-radius:3px"></div>
<div style="left:245px;top:354px;width:3px;height:44px;background:#4a5b6e;border-radius:0 2px 3px 0"></div>
<svg style="left:221px;top:352px" width="27" height="15" viewBox="0 0 27 15" ><path d="M0 0 H23 Q27 0 27 4 V15 H13 Z" fill="#4c5d71"/></svg>
<div class="t" style="right:648px;top:352px;font-weight:bold;color:#c8d5e4;font-size:9.5px;letter-spacing:-0.2px">i 5</div>
<div style="left:104px;top:354px;width:14px;height:13px;background:#46525f;border:1px solid #566270;border-radius:2px"></div>
<svg style="left:104px;top:354px" width="14" height="13" viewBox="0 0 14 13" ><path d="M4.9 4.3 A3.2 3.2 0 1 0 9.1 4.3" fill="none" stroke="#5d6975" stroke-width="1.1"/><path d="M7 2.2 V7" stroke="#5d6975" stroke-width="1.1"/></svg>
<div style="left:103px;top:368px;width:142px;height:30px;background:#232e3a;border:1px solid #3e4c5b;border-radius:3px"></div>
<svg style="left:107px;top:373px" width="6" height="9" viewBox="0 0 6 9" ><path d="M0.5 0.5 V8 L5 4.2 Z" fill="#aeb6c0"/></svg>
<div style="left:103px;top:400px;width:145px;height:46px;background:#2f3d4b;border-radius:3px"></div>
<div style="left:245px;top:402px;width:3px;height:44px;background:#4a5b6e;border-radius:0 2px 3px 0"></div>
<svg style="left:221px;top:400px" width="27" height="15" viewBox="0 0 27 15" ><path d="M0 0 H23 Q27 0 27 4 V15 H13 Z" fill="#4c5d71"/></svg>
<div class="t" style="right:648px;top:400px;font-weight:bold;color:#c8d5e4;font-size:9.5px;letter-spacing:-0.2px">i 6</div>
<div style="left:104px;top:402px;width:14px;height:13px;background:#46525f;border:1px solid #566270;border-radius:2px"></div>
<svg style="left:104px;top:402px" width="14" height="13" viewBox="0 0 14 13" ><path d="M4.9 4.3 A3.2 3.2 0 1 0 9.1 4.3" fill="none" stroke="#5d6975" stroke-width="1.1"/><path d="M7 2.2 V7" stroke="#5d6975" stroke-width="1.1"/></svg>
<div style="left:103px;top:416px;width:142px;height:30px;background:#232e3a;border:1px solid #3e4c5b;border-radius:3px"></div>
<svg style="left:107px;top:421px" width="6" height="9" viewBox="0 0 6 9" ><path d="M0.5 0.5 V8 L5 4.2 Z" fill="#aeb6c0"/></svg>
<div style="left:103px;top:447px;width:145px;height:46px;background:#2f3d4b;border-radius:3px"></div>
<div style="left:245px;top:449px;width:3px;height:44px;background:#4a5b6e;border-radius:0 2px 3px 0"></div>
<svg style="left:221px;top:447px" width="27" height="15" viewBox="0 0 27 15" ><path d="M0 0 H23 Q27 0 27 4 V15 H13 Z" fill="#4c5d71"/></svg>
<div class="t" style="right:648px;top:447px;font-weight:bold;color:#c9a050;font-size:9.5px;letter-spacing:-0.2px">i 7</div>
<div style="left:104px;top:449px;width:14px;height:13px;background:#46525f;border:1px solid #566270;border-radius:2px"></div>
<svg style="left:104px;top:449px" width="14" height="13" viewBox="0 0 14 13" ><path d="M4.9 4.3 A3.2 3.2 0 1 0 9.1 4.3" fill="none" stroke="#5d6975" stroke-width="1.1"/><path d="M7 2.2 V7" stroke="#5d6975" stroke-width="1.1"/></svg>
<div style="left:103px;top:463px;width:142px;height:30px;background:#232e3a;border:1px solid #3e4c5b;border-radius:3px"></div>
<svg style="left:107px;top:468px" width="6" height="9" viewBox="0 0 6 9" ><path d="M0.5 0.5 V8 L5 4.2 Z" fill="#aeb6c0"/></svg>
<div style="left:103px;top:494px;width:145px;height:46px;background:#2f3d4b;border-radius:3px"></div>
<div style="left:245px;top:496px;width:3px;height:44px;background:#4a5b6e;border-radius:0 2px 3px 0"></div>
<svg style="left:221px;top:494px" width="27" height="15" viewBox="0 0 27 15" ><path d="M0 0 H23 Q27 0 27 4 V15 H13 Z" fill="#4c5d71"/></svg>
<div class="t" style="right:648px;top:494px;font-weight:bold;color:#c9a050;font-size:9.5px;letter-spacing:-0.2px">i 8</div>
<div style="left:104px;top:496px;width:14px;height:13px;background:#46525f;border:1px solid #566270;border-radius:2px"></div>
<svg style="left:104px;top:496px" width="14" height="13" viewBox="0 0 14 13" ><path d="M4.9 4.3 A3.2 3.2 0 1 0 9.1 4.3" fill="none" stroke="#5d6975" stroke-width="1.1"/><path d="M7 2.2 V7" stroke="#5d6975" stroke-width="1.1"/></svg>
<div style="left:103px;top:510px;width:142px;height:30px;background:#232e3a;border:1px solid #3e4c5b;border-radius:3px"></div>
<svg style="left:107px;top:515px" width="6" height="9" viewBox="0 0 6 9" ><path d="M0.5 0.5 V8 L5 4.2 Z" fill="#aeb6c0"/></svg>
<div style="left:255px;top:180px;width:444px;height:260px;background:#000;border-radius:4px;box-shadow:1px 1px 0 #35424f"></div>
<div style="left:285px;top:190px;width:382px;height:228px;background:linear-gradient(90deg,#020305 0,#0b1018 3%,#0d131d 8%,#0c121b 20%,#020305 27%,#020305 31%,#0b1119 40%,#0d131d 47%,#0a0f17 53%,#010203 58%,#020305 62%,#0b1119 70%,#0d131d 80%,#0a0f17 88%,#000 90.5%,#000 100%)"></div>
<svg style="left:285px;top:190px" width="382" height="228" viewBox="0 0 382 228" ><path d="M0 -0.5 H382" stroke="rgba(150,180,190,.26)" stroke-width="1"/><path d="M0 28.5 H382" stroke="rgba(150,180,190,.26)" stroke-width="1"/><path d="M0 56.5 H382" stroke="rgba(150,180,190,.26)" stroke-width="1"/><path d="M0 84.5 H382" stroke="rgba(150,180,190,.26)" stroke-width="1"/><path d="M0 113.5 H382" stroke="rgba(150,180,190,.26)" stroke-width="1"/><path d="M0 142.5 H382" stroke="rgba(150,180,190,.26)" stroke-width="1"/><path d="M0 170.5 H382" stroke="rgba(150,180,190,.26)" stroke-width="1"/><path d="M0 198.5 H382" stroke="rgba(150,180,190,.26)" stroke-width="1"/><path d="M0 227.5 H382" stroke="rgba(150,180,190,.26)" stroke-width="1"/><path d="M-0.5 0 V228" stroke="rgba(150,180,190,.29)" stroke-width="1"/><path d="M50.5 0 V228" stroke="rgba(150,180,190,.29)" stroke-width="1"/><path d="M88.5 0 V228" stroke="rgba(150,180,190,.29)" stroke-width="1"/><path d="M126.5 0 V228" stroke="rgba(150,180,190,.29)" stroke-width="1"/><path d="M177.5 0 V228" stroke="rgba(150,180,190,.29)" stroke-width="1"/><path d="M215.5 0 V228" stroke="rgba(150,180,190,.29)" stroke-width="1"/><path d="M254.5 0 V228" stroke="rgba(150,180,190,.29)" stroke-width="1"/><path d="M304.5 0 V228" stroke="rgba(150,180,190,.29)" stroke-width="1"/><path d="M343.5 0 V228" stroke="rgba(150,180,190,.29)" stroke-width="1"/><path d="M381.5 0 V228" stroke="rgba(150,180,190,.29)" stroke-width="1"/><path d="M0 113.5 H382" stroke="#256a56" stroke-width="2.4" opacity="0.4"/><path d="M0 113.5 H382" stroke="#44aa89" stroke-width="1.3"/><circle cx="88.5" cy="113.5" r="2.5" fill="#7adec0"/><text x="88.5" y="109.0" font-family="Liberation Sans,sans-serif" font-size="8" text-anchor="middle" fill="#cfe8e0" textLength="4" lengthAdjust="spacingAndGlyphs">1</text><circle cx="203.6" cy="113.5" r="2.5" fill="#7adec0"/><text x="203.6" y="109.0" font-family="Liberation Sans,sans-serif" font-size="8" text-anchor="middle" fill="#cfe8e0" textLength="4" lengthAdjust="spacingAndGlyphs">2</text><circle cx="254.3" cy="113.5" r="2.5" fill="#7adec0"/><text x="254.3" y="109.0" font-family="Liberation Sans,sans-serif" font-size="8" text-anchor="middle" fill="#cfe8e0" textLength="4" lengthAdjust="spacingAndGlyphs">3</text><circle cx="353.4" cy="113.5" r="2.5" fill="#7adec0"/><text x="353.4" y="109.0" font-family="Liberation Sans,sans-serif" font-size="8" text-anchor="middle" fill="#cfe8e0" textLength="4" lengthAdjust="spacingAndGlyphs">4</text></svg>
<div class="t" style="right:608px;top:184px;font-size:9.5px;color:#c4cad0;line-height:12px;transform:scaleX(.74);transform-origin:100% 50%">+24</div>
<div class="t" style="right:608px;top:212px;font-size:9.5px;color:#c4cad0;line-height:12px;transform:scaleX(.74);transform-origin:100% 50%">+ 18</div>
<div class="t" style="right:608px;top:240px;font-size:9.5px;color:#c4cad0;line-height:12px;transform:scaleX(.74);transform-origin:100% 50%">+ 12</div>
<div class="t" style="right:608px;top:269px;font-size:9.5px;color:#c4cad0;line-height:12px;transform:scaleX(.74);transform-origin:100% 50%">+ 6</div>
<div class="t" style="right:608px;top:298px;font-size:9.5px;color:#c4cad0;line-height:12px;transform:scaleX(.74);transform-origin:100% 50%">0</div>
<div class="t" style="right:608px;top:326px;font-size:9.5px;color:#c4cad0;line-height:12px;transform:scaleX(.74);transform-origin:100% 50%">− 6</div>
<div class="t" style="right:608px;top:354px;font-size:9.5px;color:#c4cad0;line-height:12px;transform:scaleX(.74);transform-origin:100% 50%">− 12</div>
<div class="t" style="right:608px;top:383px;font-size:9.5px;color:#c4cad0;line-height:12px;transform:scaleX(.74);transform-origin:100% 50%">− 18</div>
<div class="t" style="right:608px;top:412px;font-size:9.5px;color:#c4cad0;line-height:12px;transform:scaleX(.74);transform-origin:100% 50%">− 24</div>
<div class="t" style="left:269.5px;top:419px;width:30px;text-align:center;font-size:9.5px;color:#c4cad0;line-height:12px;transform:scaleX(.74)">20</div>
<div class="t" style="left:320.1px;top:419px;width:30px;text-align:center;font-size:9.5px;color:#c4cad0;line-height:12px;transform:scaleX(.74)">50</div>
<div class="t" style="left:358.5px;top:419px;width:30px;text-align:center;font-size:9.5px;color:#c4cad0;line-height:12px;transform:scaleX(.74)">100</div>
<div class="t" style="left:396.9px;top:419px;width:30px;text-align:center;font-size:9.5px;color:#c4cad0;line-height:12px;transform:scaleX(.74)">200</div>
<div class="t" style="left:447.5px;top:419px;width:30px;text-align:center;font-size:9.5px;color:#c4cad0;line-height:12px;transform:scaleX(.74)">500</div>
<div class="t" style="left:485.9px;top:419px;width:30px;text-align:center;font-size:9.5px;color:#c4cad0;line-height:12px;transform:scaleX(.74)">1k</div>
<div class="t" style="left:524.3px;top:419px;width:30px;text-align:center;font-size:9.5px;color:#c4cad0;line-height:12px;transform:scaleX(.74)">2k</div>
<div class="t" style="left:574.9px;top:419px;width:30px;text-align:center;font-size:9.5px;color:#c4cad0;line-height:12px;transform:scaleX(.74)">5k</div>
<div class="t" style="left:613.3px;top:419px;width:30px;text-align:center;font-size:9.5px;color:#c4cad0;line-height:12px;transform:scaleX(.74)">10k</div>
<div class="t" style="left:651.7px;top:419px;width:30px;text-align:center;font-size:9.5px;color:#c4cad0;line-height:12px;transform:scaleX(.74)">20k</div>
<div style="left:672px;top:296px;width:21px;height:13px;background:#3a494d"></div>
<svg style="left:672px;top:296px" width="21" height="13" viewBox="0 0 21 13" ><path d="M5 10.2 V4.5 M4.4 10.2 H11 M9.5 3 H15.6 V8" fill="none" stroke="#0c171c" stroke-width="1.3"/><path d="M2.4 5.2 L5 1.6 L7.6 5.2 Z M13 7.4 L15.6 11 L18.2 7.4 Z" fill="#0c171c"/></svg>
<div style="left:254px;top:446px;width:108px;height:97px;background:#2f3d4b;border-radius:4px"></div>
<div style="left:358px;top:450px;width:4px;height:90px;background:#4a5b6e;border-radius:0 2px 3px 0"></div>
<svg style="left:310px;top:447px" width="52" height="17" viewBox="0 0 52 17" ><path d="M0 0 H48 Q52 0 52 4 V17 H14 Z" fill="#4c5d71"/></svg>
<div class="t" style="right:533px;top:448px;font-weight:bold;color:#adc0d6;font-size:10px;letter-spacing:-0.2px">eq 1</div>
<div style="left:256px;top:448px;width:15px;height:14px;background:linear-gradient(#55d56a,#35b54c);border:1px solid #1d7a30;border-radius:2px"></div>
<svg style="left:256px;top:448px" width="15" height="14" viewBox="0 0 15 14" ><path d="M5.1 4.6 A3.6 3.6 0 1 0 9.9 4.6" fill="none" stroke="#0a5a1c" stroke-width="1.4"/><path d="M7.5 2.4 V7.6" stroke="#0a5a1c" stroke-width="1.4"/></svg>
<div style="left:255px;top:464px;width:103px;height:75px;background:#000;border-radius:3px"></div>
<div class="t" style="right:536px;top:470px;font-weight:bold;color:#d8dde3;font-size:11.5px;letter-spacing:-0.2px">0.0</div>
<div style="left:256px;top:489px;width:101px;height:2px;background:#2e3236"></div>
<div style="left:304px;top:489px;width:5px;height:2px;background:#c8eed2"></div>
<div class="t" style="right:536px;top:496px;font-weight:bold;color:#d8dde3;font-size:11.5px;letter-spacing:-0.3px">100.0 Hz</div>
<div style="left:256px;top:514px;width:101px;height:2px;background:#2e3236"></div>
<div style="left:256px;top:514px;width:15px;height:2px;background:#30a24c"></div>
<div style="left:271px;top:514px;width:5px;height:2px;background:#c8eed2"></div>
<div class="t" style="left:260px;top:519px;color:#80868c;font-size:11px;letter-spacing:-0.45px">Low Shelf I</div>
<div class="t" style="right:536px;top:519px;color:#d4d8dc;font-size:11px;letter-spacing:-0.2px">7.0</div>
<div style="left:256px;top:536px;width:101px;height:2px;background:#2e3236"></div>
<div style="left:283px;top:536px;width:5px;height:2px;background:#c8eed2"></div>
<div style="left:288px;top:536px;width:35px;height:2px;background:#30a24c"></div>
<div style="left:323px;top:536px;width:5px;height:2px;background:#c8eed2"></div>
<div style="left:367px;top:446px;width:108px;height:97px;background:#2f3d4b;border-radius:4px"></div>
<div style="left:471px;top:450px;width:4px;height:90px;background:#4a5b6e;border-radius:0 2px 3px 0"></div>
<svg style="left:423px;top:447px" width="52" height="17" viewBox="0 0 52 17" ><path d="M0 0 H48 Q52 0 52 4 V17 H14 Z" fill="#4c5d71"/></svg>
<div class="t" style="right:420px;top:448px;font-weight:bold;color:#adc0d6;font-size:10px;letter-spacing:-0.2px">eq 2</div>
<div style="left:369px;top:448px;width:15px;height:14px;background:linear-gradient(#55d56a,#35b54c);border:1px solid #1d7a30;border-radius:2px"></div>
<svg style="left:369px;top:448px" width="15" height="14" viewBox="0 0 15 14" ><path d="M5.1 4.6 A3.6 3.6 0 1 0 9.9 4.6" fill="none" stroke="#0a5a1c" stroke-width="1.4"/><path d="M7.5 2.4 V7.6" stroke="#0a5a1c" stroke-width="1.4"/></svg>
<div style="left:368px;top:464px;width:103px;height:75px;background:#000;border-radius:3px"></div>
<div class="t" style="right:423px;top:470px;font-weight:bold;color:#d8dde3;font-size:11.5px;letter-spacing:-0.2px">0.0</div>
<div style="left:369px;top:489px;width:101px;height:2px;background:#2e3236"></div>
<div style="left:417px;top:489px;width:5px;height:2px;background:#c8eed2"></div>
<div class="t" style="right:423px;top:496px;font-weight:bold;color:#d8dde3;font-size:11.5px;letter-spacing:-0.3px">800.0 Hz</div>
<div style="left:369px;top:514px;width:101px;height:2px;background:#2e3236"></div>
<div style="left:370px;top:514px;width:31px;height:2px;background:#30a24c"></div>
<div style="left:401px;top:514px;width:5px;height:2px;background:#c8eed2"></div>
<div class="t" style="left:373px;top:519px;color:#80868c;font-size:11px;letter-spacing:-0.45px">Parametric I</div>
<div class="t" style="right:423px;top:519px;color:#d4d8dc;font-size:11px;letter-spacing:-0.2px">0.2</div>
<div style="left:369px;top:536px;width:101px;height:2px;background:#2e3236"></div>
<div style="left:370px;top:536px;width:5px;height:2px;background:#c8eed2"></div>
<div style="left:375px;top:536px;width:90px;height:2px;background:#30a24c"></div>
<div style="left:465px;top:536px;width:5px;height:2px;background:#c8eed2"></div>
<div style="left:481px;top:446px;width:108px;height:97px;background:#2f3d4b;border-radius:4px"></div>
<div style="left:585px;top:450px;width:4px;height:90px;background:#4a5b6e;border-radius:0 2px 3px 0"></div>
<svg style="left:537px;top:447px" width="52" height="17" viewBox="0 0 52 17" ><path d="M0 0 H48 Q52 0 52 4 V17 H14 Z" fill="#4c5d71"/></svg>
<div class="t" style="right:306px;top:448px;font-weight:bold;color:#adc0d6;font-size:10px;letter-spacing:-0.2px">eq 3</div>
<div style="left:483px;top:448px;width:15px;height:14px;background:linear-gradient(#55d56a,#35b54c);border:1px solid #1d7a30;border-radius:2px"></div>
<svg style="left:483px;top:448px" width="15" height="14" viewBox="0 0 15 14" ><path d="M5.1 4.6 A3.6 3.6 0 1 0 9.9 4.6" fill="none" stroke="#0a5a1c" stroke-width="1.4"/><path d="M7.5 2.4 V7.6" stroke="#0a5a1c" stroke-width="1.4"/></svg>
<div style="left:482px;top:464px;width:103px;height:75px;background:#000;border-radius:3px"></div>
<div class="t" style="right:309px;top:470px;font-weight:bold;color:#d8dde3;font-size:11.5px;letter-spacing:-0.2px">0.0</div>
<div style="left:483px;top:489px;width:101px;height:2px;background:#2e3236"></div>
<div style="left:531px;top:489px;width:5px;height:2px;background:#c8eed2"></div>
<div class="t" style="right:309px;top:496px;font-weight:bold;color:#d8dde3;font-size:11.5px;letter-spacing:-0.3px">2000.0 Hz</div>
<div style="left:483px;top:514px;width:101px;height:2px;background:#2e3236"></div>
<div style="left:483px;top:514px;width:44px;height:2px;background:#30a24c"></div>
<div style="left:527px;top:514px;width:5px;height:2px;background:#c8eed2"></div>
<div class="t" style="left:487px;top:519px;color:#80868c;font-size:11px;letter-spacing:-0.45px">Parametric I</div>
<div class="t" style="right:309px;top:519px;color:#d4d8dc;font-size:11px;letter-spacing:-0.2px">0.2</div>
<div style="left:483px;top:536px;width:101px;height:2px;background:#2e3236"></div>
<div style="left:483px;top:536px;width:5px;height:2px;background:#c8eed2"></div>
<div style="left:488px;top:536px;width:90px;height:2px;background:#30a24c"></div>
<div style="left:578px;top:536px;width:5px;height:2px;background:#c8eed2"></div>
<div style="left:595px;top:446px;width:108px;height:97px;background:#2f3d4b;border-radius:4px"></div>
<div style="left:699px;top:450px;width:4px;height:90px;background:#4a5b6e;border-radius:0 2px 3px 0"></div>
<svg style="left:651px;top:447px" width="52" height="17" viewBox="0 0 52 17" ><path d="M0 0 H48 Q52 0 52 4 V17 H14 Z" fill="#4c5d71"/></svg>
<div class="t" style="right:192px;top:448px;font-weight:bold;color:#adc0d6;font-size:10px;letter-spacing:-0.2px">eq 4</div>
<div style="left:597px;top:448px;width:15px;height:14px;background:linear-gradient(#55d56a,#35b54c);border:1px solid #1d7a30;border-radius:2px"></div>
<svg style="left:597px;top:448px" width="15" height="14" viewBox="0 0 15 14" ><path d="M5.1 4.6 A3.6 3.6 0 1 0 9.9 4.6" fill="none" stroke="#0a5a1c" stroke-width="1.4"/><path d="M7.5 2.4 V7.6" stroke="#0a5a1c" stroke-width="1.4"/></svg>
<div style="left:596px;top:464px;width:103px;height:75px;background:#000;border-radius:3px"></div>
<div class="t" style="right:195px;top:470px;font-weight:bold;color:#d8dde3;font-size:11.5px;letter-spacing:-0.2px">0.0</div>
<div style="left:597px;top:489px;width:101px;height:2px;background:#2e3236"></div>
<div style="left:645px;top:489px;width:5px;height:2px;background:#c8eed2"></div>
<div class="t" style="right:195px;top:496px;font-weight:bold;color:#d8dde3;font-size:11.5px;letter-spacing:-0.3px">12000 Hz</div>
<div style="left:597px;top:514px;width:101px;height:2px;background:#2e3236"></div>
<div style="left:597px;top:514px;width:80px;height:2px;background:#30a24c"></div>
<div style="left:677px;top:514px;width:5px;height:2px;background:#c8eed2"></div>
<div class="t" style="left:601px;top:519px;color:#80868c;font-size:11px;letter-spacing:-0.45px">High Shelf I</div>
<div class="t" style="right:195px;top:519px;color:#d4d8dc;font-size:11px;letter-spacing:-0.2px">7.0</div>
<div style="left:597px;top:536px;width:101px;height:2px;background:#2e3236"></div>
<div style="left:623px;top:536px;width:5px;height:2px;background:#c8eed2"></div>
<div style="left:628px;top:536px;width:36px;height:2px;background:#30a24c"></div>
<div style="left:664px;top:536px;width:5px;height:2px;background:#c8eed2"></div>
<div style="left:709px;top:139px;width:84px;height:20px;background:linear-gradient(#526275,#49596b)"></div>
<div class="t" style="left:713px;top:142px;font-weight:bold;color:#fff;letter-spacing:-0.5px">FX 1</div>
<div style="left:710px;top:163px;width:12px;height:12px;background:#7f8c9c"></div>
<svg style="left:710px;top:163px" width="12" height="12" viewBox="0 0 12 12" ><path d="M2.5 4 H9.5 L6 8 Z" fill="#3f4d5e"/></svg>
<div class="t" style="right:100px;top:160px;font-weight:bold;color:#e8edf2;font-size:17px;line-height:20px;letter-spacing:-0.8px">26</div>
<div style="left:709px;top:180px;width:84px;height:1px;background:#9aa8b6"></div>
<div style="left:712px;top:202px;width:77px;height:14px;background:#0e1a2a"></div>
<div class="t" style="left:715px;top:202px;color:#e6ebf1;font-size:10.5px;letter-spacing:-0.5px">MOTIF XF Main</div>
<svg style="left:712px;top:216px" width="60" height="15" viewBox="0 0 60 15" ><path d="M0 0 H60 L48 15 H3 Q0 15 0 12 Z" fill="#46566a"/></svg>
<div class="t" style="left:715px;top:216px;color:#8e9bab;font-size:11px;letter-spacing:-0.1px">stéréo</div>
<div class="t" style="left:715px;top:236px;color:#fff;font-size:11px;letter-spacing:-0.6px">FX 1</div>
<div class="t" style="right:105px;top:236px;color:#141b24;font-size:11px;letter-spacing:-0.4px">26</div>
<div style="left:709px;top:258px;width:83px;height:277px;background:#2a3847;border:1px solid #5f6e7d;border-radius:7px"></div>
<div style="left:715px;top:267px;width:70px;height:14px;background:#121c2a;border-radius:2px"></div>
<div style="left:749px;top:268px;width:2px;height:11px;background:#4fc3e8"></div>
<div style="left:715px;top:280px;width:32px;height:18px;background:#000;border-radius:0 0 2px 2px"></div>
<div class="t" style="left:727px;top:283px;color:#b8bcc0;font-size:11px">C</div>
<div style="left:749px;top:283px;width:37px;height:214px;background:#9f8ba2;border:1px solid #b09fb3"></div>
<div style="left:758px;top:290px;width:1px;height:200px;background:#7e6a82"></div>
<div style="left:751px;top:301px;width:17px;height:1px;background:#8d7890"></div>
<div style="left:751px;top:350px;width:17px;height:1px;background:#8d7890"></div>
<div style="left:751px;top:398px;width:17px;height:1px;background:#8d7890"></div>
<div style="left:751px;top:446px;width:17px;height:1px;background:#8d7890"></div>
<div style="left:751px;top:479px;width:17px;height:1px;background:#8d7890"></div>
<div style="left:770px;top:287px;width:14px;height:207px;background:repeating-linear-gradient(#12263f 0,#12263f 1px,#1a3656 1px,#1a3656 2px)"></div>
<div style="left:771px;top:304px;width:12px;height:1px;background:#5b7fae"></div>
<div style="left:752px;top:322px;width:14px;height:32px;background:linear-gradient(90deg,#9db4d0,#f4f8fc 35%,#fff 60%,#a9bdd6);border-radius:6px;border:1px solid #6f829b"></div>
<div style="left:754px;top:325px;width:10px;height:12px;background:linear-gradient(#b9cde6,#e8f0fa);border-radius:4px 4px 1px 1px;opacity:.8"></div>
<div style="left:750px;top:338px;width:18px;height:1px;background:#222"></div>
<div style="left:717px;top:303px;width:27px;height:223px;border:1px solid #566676;border-radius:5px 5px 13px 13px;background:#2b3745"></div>
<div style="left:719px;top:307px;width:21px;height:12px;background:linear-gradient(#c6c9cd,#a6aaaf);border:1px solid #5e646b;border-radius:2px"></div>
<div class="t b" style="left:719px;top:305px;width:21px;text-align:center;font-size:13px;color:#0c0c0c;line-height:14px;transform:scaleX(1.05)">m</div>
<div style="left:719px;top:323px;width:21px;height:12px;background:linear-gradient(#c6c9cd,#a6aaaf);border:1px solid #5e646b;border-radius:2px"></div>
<div class="t b" style="left:719px;top:322px;width:21px;text-align:center;font-size:10px;color:#0c0c0c;line-height:14px;transform:scaleX(1.25)">S</div>
<div style="left:719px;top:361px;width:21px;height:12px;background:linear-gradient(#c6c9cd,#a6aaaf);border:1px solid #5e646b;border-radius:2px"></div>
<div class="t b" style="left:719px;top:360px;width:21px;text-align:center;font-size:10px;color:#0c0c0c;line-height:14px;transform:scaleX(1.25)">R</div>
<div style="left:719px;top:377px;width:21px;height:12px;background:linear-gradient(#c6c9cd,#a6aaaf);border:1px solid #5e646b;border-radius:2px"></div>
<div class="t b" style="left:719px;top:375px;width:21px;text-align:center;font-size:13px;color:#0c0c0c;line-height:14px;transform:scaleX(1.05)">w</div>
<div style="left:719px;top:413px;width:21px;height:12px;background:linear-gradient(#86b8f5,#5f9eec);border:1px solid #2c5fa8;border-radius:2px"></div>
<svg style="left:719px;top:413px" width="21" height="12" viewBox="0 0 21 12" ><path d="M4.5 6 H8.7 M12.3 6 H16.5" stroke="#10233f" stroke-width="1.1"/><rect x="8.7" y="4.2" width="3.6" height="3.6" fill="#a8cdf8" stroke="#10233f" stroke-width="1.1"/></svg>
<div style="left:719px;top:429px;width:21px;height:13px;background:linear-gradient(#55dc70,#35c04e);border:1px solid #1d7a30;border-radius:2px"></div>
<svg style="left:719px;top:429px" width="21" height="13" viewBox="0 0 21 13" ><path d="M10.5 1.5 V11.5" stroke="#0c4a1a" stroke-width="1"/><path d="M10.5 2.5 L14.5 6.5 L10.5 10.5 L6.5 6.5 Z" fill="none" stroke="#0c4a1a" stroke-width="1"/></svg>
<div style="left:749px;top:502px;width:37px;height:24px;background:#000;border-radius:2px"></div>
<div class="t" style="left:753px;top:512px;color:#e0e4e8;font-size:11px;letter-spacing:-0.3px">0.00</div>
<div class="t" style="right:106px;top:505px;color:#c0c6cc;font-size:7px;line-height:8px">-∞</div>
</body></html>
